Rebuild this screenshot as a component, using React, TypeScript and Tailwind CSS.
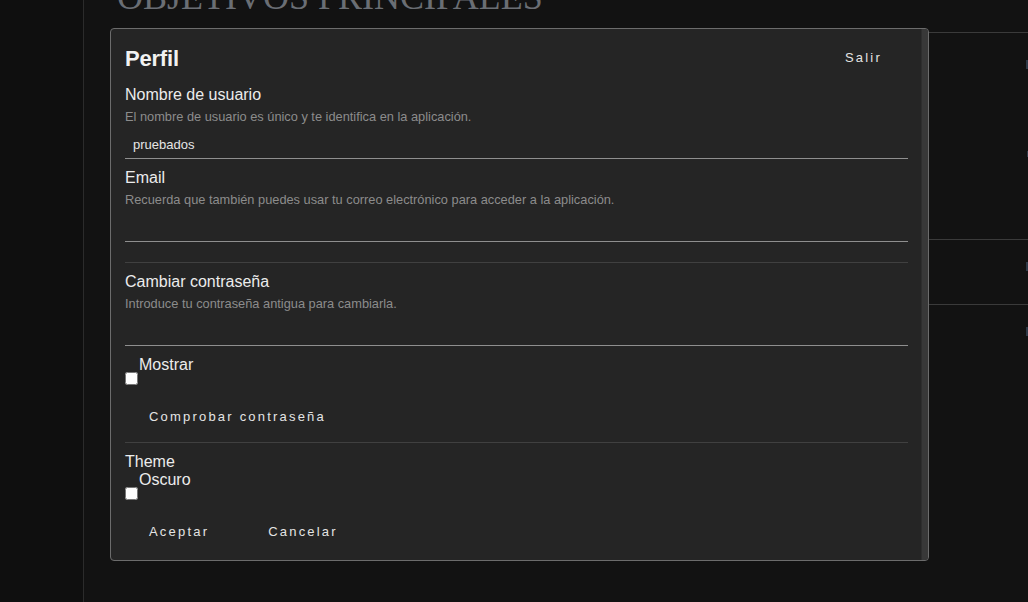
import React from 'react';

const font = { fontFamily: '"Liberation Sans", Arial, sans-serif' };

const Field: React.FC<{ label: string; help: string; value?: string }> = ({ label, help, value }) => (
  <div>
    <div className="text-[16px] leading-[20px] text-[#ececec]">{label}</div>
    <div className="mt-[4px] text-[12.8px] leading-[16px] text-[#8c8c8c]">{help}</div>
    <div className="mt-[7px] h-[27px] border-b border-[#8f8f8f] flex items-center px-2 text-[13px] text-[#e6e6e6]">
      {value}
    </div>
  </div>
);

const TextButton: React.FC<{ children: React.ReactNode }> = ({ children }) => (
  <button className="h-[36px] px-6 text-[13px] tracking-[2.2px] text-[#e4e4e4] whitespace-nowrap">
    {children}
  </button>
);

const CheckRow: React.FC<{ label: string }> = ({ label }) => (
  <label className="flex items-start">
    <input type="checkbox" className="m-0 mt-[16px] w-[13px] h-[13px] shrink-0" />
    <span className="ml-[1px] text-[16px] leading-[18px] text-[#ececec]">{label}</span>
  </label>
);

export default function App() {
  return (
    <div className="w-[1028px] h-[602px] overflow-hidden flex bg-[#121212]" style={font}>
      <aside className="w-[84px] shrink-0 bg-[#0f0f0f] border-r border-[#2b2b2b]" />

      <main className="flex-1 relative">
        <h1
          className="pl-[33px] mt-[-21px] text-[36px] leading-none text-[#6a6e74] whitespace-nowrap"
          style={{ fontFamily: '"Liberation Serif", "Times New Roman", serif' }}
        >
          OBJETIVOS PRINCIPALES
        </h1>

        <div className="mt-[17px] ml-[33px] border-t border-[#3a3a3a]">
          <div className="h-[207px] border-b border-[#3a3a3a] flex flex-col items-end pt-[27px] gap-[82px]">
            <span className="block w-[9px] h-[9px] mr-[-7px] bg-[#2f3a48]" />
            <span className="block w-[6px] h-[6px] mr-[-5px] bg-[#2f3a48]" />
          </div>
          <div className="h-[65px] border-b border-[#3a3a3a] flex justify-end pt-[22px]">
            <span className="block w-[9px] h-[9px] mr-[-7px] bg-[#2f3a48]" />
          </div>
          <div className="h-[120px] flex justify-end pt-[22px]">
            <span className="block w-[9px] h-[9px] mr-[-7px] bg-[#2f3a48]" />
          </div>
        </div>
      </main>

      {/* dialog */}
      <div className="absolute left-[110px] top-[28px] w-[819px] h-[533px] rounded-[4px] border border-[#6c6c6c] bg-[#252525] flex overflow-hidden">
        <div className="flex-1 pl-[14px] pr-[13px] pt-[11px]">
          <div className="flex items-center justify-between h-[36px]">
            <h2 className="text-[22px] font-bold text-[#f2f2f2] tracking-[-0.2px]">Perfil</h2>
            <div className="mr-[2px]">
              <TextButton>Salir</TextButton>
            </div>
          </div>

          <div className="mt-[9px]">
            <Field label="Nombre de usuario" help="El nombre de usuario es único y te identifica en la aplicación." value="pruebados" />
          </div>
          <div className="mt-[9px]">
            <Field label="Email" help="Recuerda que también puedes usar tu correo electrónico para acceder a la aplicación." />
          </div>

          <hr className="mt-[20px] border-0 border-t border-[#404040]" />

          <div className="mt-[9px]">
            <Field label="Cambiar contraseña" help="Introduce tu contraseña antigua para cambiarla." />
          </div>

          <div className="mt-[10px]">
            <CheckRow label="Mostrar" />
          </div>
          <div className="mt-[14px]">
            <TextButton>Comprobar contraseña</TextButton>
          </div>

          <hr className="mt-[7px] border-0 border-t border-[#404040]" />

          <div className="mt-[10px] text-[16px] leading-[18px] text-[#ececec]">Theme</div>
          <CheckRow label="Oscuro" />

          <div className="mt-[14px] flex gap-[11px]">
            <TextButton>Aceptar</TextButton>
            <TextButton>Cancelar</TextButton>
          </div>
        </div>
        <div className="w-[7px] bg-[#383838] border-l border-[#2e2e2e]" />
      </div>
    </div>
  );
}
